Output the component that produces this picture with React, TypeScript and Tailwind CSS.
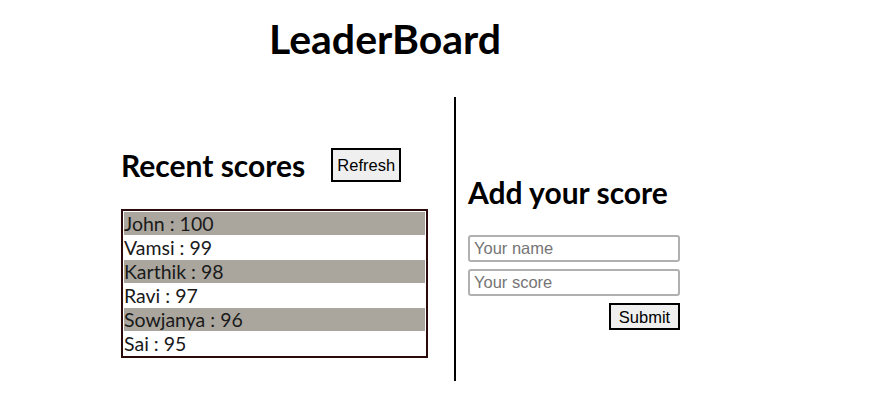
const scores = [
  { name: 'John', score: 100 },
  { name: 'Vamsi', score: 99 },
  { name: 'Karthik', score: 98 },
  { name: 'Ravi', score: 97 },
  { name: 'Sowjanya', score: 96 },
  { name: 'Sai', score: 95 },
]

export default function App() {
  return (
    <div className="min-h-[400px] w-[873px] bg-white font-['Lato',sans-serif] text-black">
      <h1 className="w-[770px] pt-[14px] text-center text-[41px] font-bold leading-[50px]">LeaderBoard</h1>

      <div className="mt-[33px] flex">
        {/* left: recent scores */}
        <div className="h-[284px] w-[456px] shrink-0 border-r-2 border-black pl-[121px] pt-[51px]">
          <div className="flex items-center">
            <h2 className="whitespace-nowrap text-[30px] font-bold leading-[34px]">Recent scores</h2>
            <button className="ml-[26px] h-[34px] w-[70px] border-2 border-black bg-[#efefef] font-['Liberation_Sans',sans-serif] text-[16.5px]">
              Refresh
            </button>
          </div>
          <ul className="mt-[27px] w-[307px] border-2 border-[#2a0a0a] px-px pb-px">
            {scores.map((s, i) => (
              <li
                key={s.name}
                className={`mt-px h-[23px] text-[19.5px] leading-[23px] text-[#1a1a1a] ${i % 2 === 0 ? 'bg-[#aaa69e]' : 'bg-white'}`}
              >
                {s.name} : {s.score}
              </li>
            ))}
          </ul>
        </div>

        {/* right: add score */}
        <div className="pl-[12px] pt-[78px]">
          <h2 className="whitespace-nowrap text-[30px] font-bold leading-[34px]">Add your score</h2>
          <div className="mt-[26px] flex w-[212px] flex-col items-end gap-[7px]">
            <input
              placeholder="Your name"
              className="h-[27px] w-[212px] rounded-[3px] border-2 border-[#b0b0b0] px-[4px] font-['Liberation_Sans',sans-serif] text-[16.5px] placeholder:text-[#757575]"
            />
            <input
              placeholder="Your score"
              className="h-[27px] w-[212px] rounded-[3px] border-2 border-[#b0b0b0] px-[4px] font-['Liberation_Sans',sans-serif] text-[16.5px] placeholder:text-[#757575]"
            />
            <button className="h-[27px] w-[71px] border-2 border-black bg-[#efefef] font-['Liberation_Sans',sans-serif] text-[16.5px]">
              Submit
            </button>
          </div>
        </div>
      </div>
    </div>
  )
}
